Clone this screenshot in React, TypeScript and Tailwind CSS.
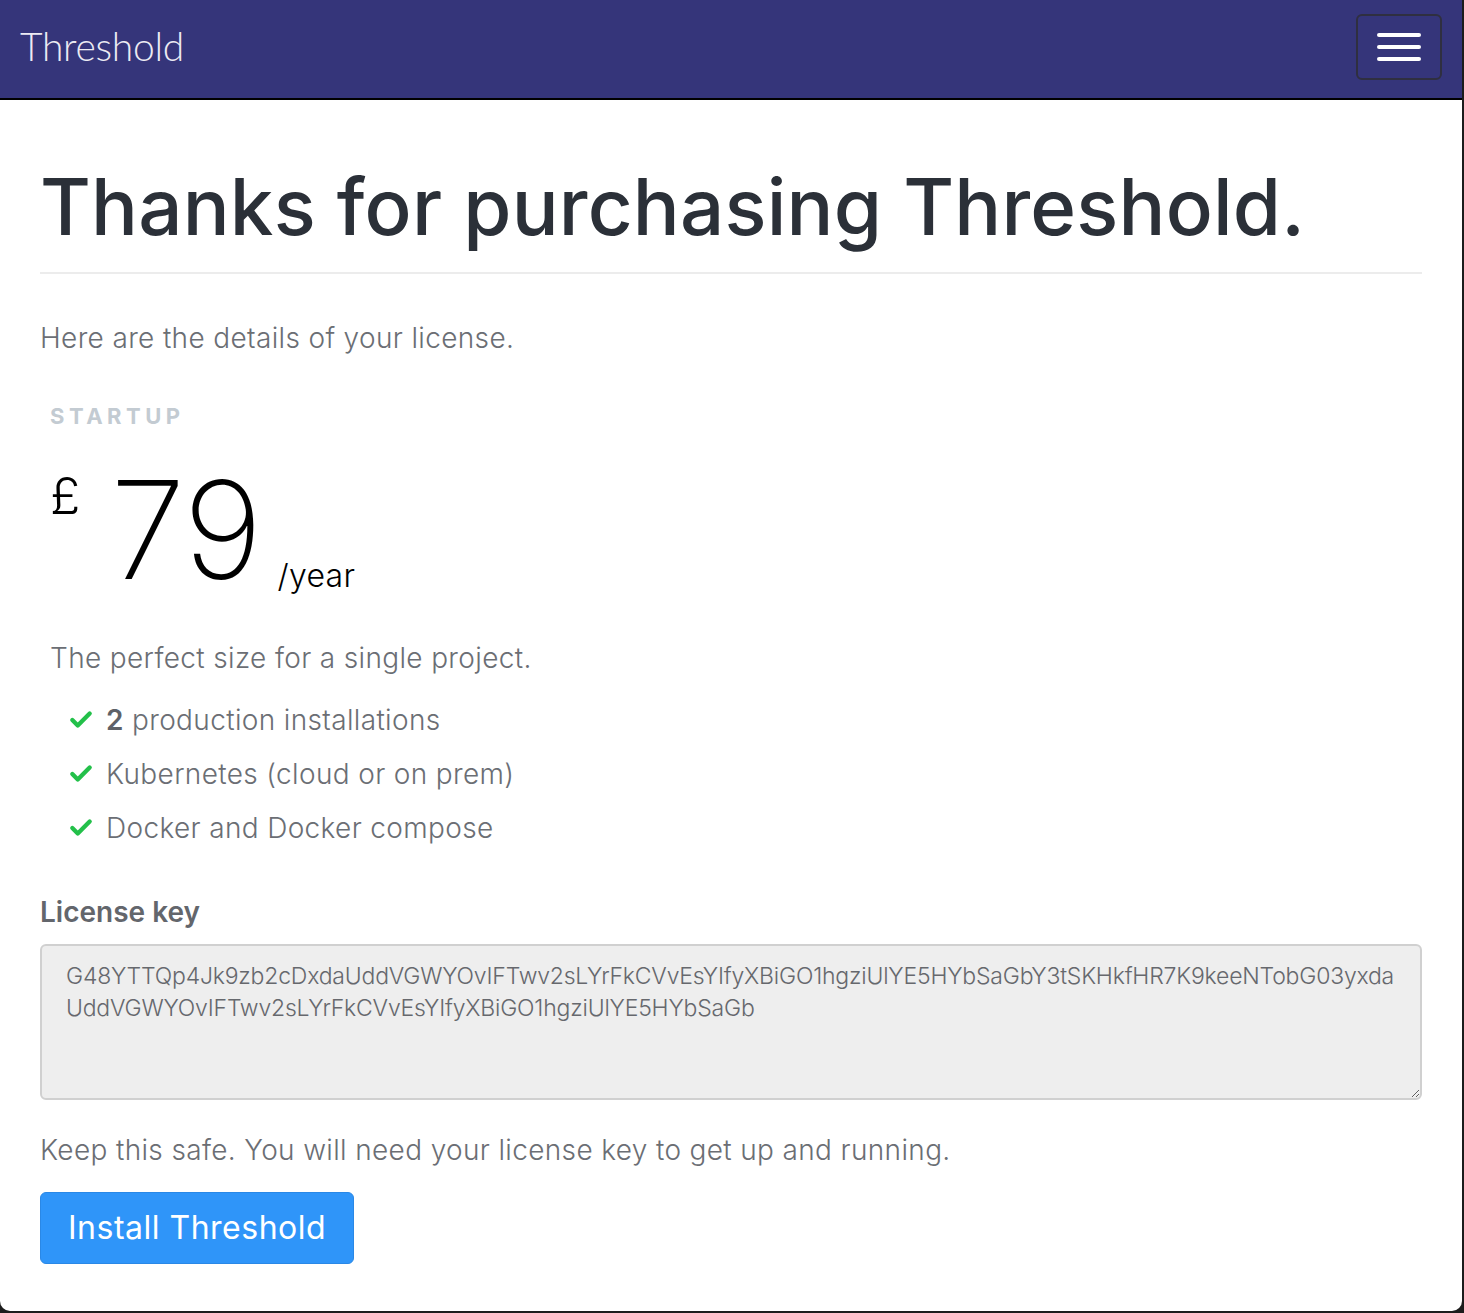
import { Check } from 'lucide-react';

const licenseKey =
  'G48YTTQp4Jk9zb2cDxdaUddVGWYOvIFTwv2sLYrFkCVvEsYIfyXBiGO1hgziUlYE5HYbSaGbY3tSKHkfHR7K9keeNTobG03yxda\nUddVGWYOvIFTwv2sLYrFkCVvEsYIfyXBiGO1hgziUlYE5HYbSaGb';

const features = [
  { bold: '2', text: ' production installations' },
  { bold: '', text: 'Kubernetes (cloud or on prem)' },
  { bold: '', text: 'Docker and Docker compose' },
];

function App() {
  return (
    <div className="min-h-[1313px] w-full bg-[#1c1c1c] pr-[2px] pb-[2px] font-['Inter',sans-serif]">
      <div className="min-h-[1311px] bg-white rounded-b-[10px] overflow-hidden">
        <nav className="h-[100px] bg-[#35357a] border-b-2 border-black flex items-center justify-between pl-5 pr-5">
          <span className="mt-[-6px] text-[39px] font-light text-[#ecebf3] tracking-[-0.3px] font-['Lato',sans-serif]">Threshold</span>
          <button className="w-[86px] h-[66px] mt-[-4px] border-2 border-[#2f2f40] rounded-[6px] flex flex-col items-center justify-center gap-[8px]">
            <span className="block w-[44px] h-[4px] bg-white rounded-sm" />
            <span className="block w-[44px] h-[4px] bg-white rounded-sm" />
            <span className="block w-[44px] h-[4px] bg-white rounded-sm" />
          </button>
        </nav>

        <main className="px-10">
          <h1 className="pt-[62px] pb-[20px] text-[78px] leading-[90px] font-medium text-[#2b3038] tracking-[0.2px] border-b-2 border-[#ececec]">
            Thanks for purchasing Threshold.
          </h1>

          <p className="mt-[46px] text-[28px] font-light text-[#6b6e74] leading-[36px] tracking-[0.35px]">
            Here are the details of your license.
          </p>

          <div className="ml-[10px]">
            <div className="mt-[46px] text-[22px] font-bold tracking-[4.5px] text-[#c3cbd2] leading-[28px]">STARTUP</div>

            <div className="mt-[40px] flex items-end text-black">
              <span className="self-start mt-[2px] text-[50px] font-light leading-[48px]">£</span>
              <span className="text-[136px] font-extralight leading-[120px] ml-[30px] tracking-[-1px]">79</span>
              <span className="ml-[16px] mb-[-4px] text-[32px] font-light leading-[36px] tracking-[0.3px]">/year</span>
            </div>

            <p className="mt-[50px] text-[28px] font-light text-[#6b6e74] leading-[36px] tracking-[0.35px]">
              The perfect size for a single project.
            </p>

            <ul className="mt-[26px] flex flex-col gap-[18px] pl-[18px]">
              {features.map((f, i) => (
                <li key={i} className="flex items-center gap-[12px] text-[28px] font-light text-[#6b6e74] leading-[36px] tracking-[0.35px]">
                  <Check className="w-[26px] h-[26px] text-[#23c04a]" strokeWidth={4} />
                  <span>
                    {f.bold && <b className="font-semibold text-[#5e6167]">{f.bold}</b>}
                    {f.text}
                  </span>
                </li>
              ))}
            </ul>
          </div>

          <label className="block mt-[48px] text-[28px] font-semibold text-[#63666c] leading-[36px]">License key</label>
          <textarea
            readOnly
            value={licenseKey}
            className="mt-[14px] block w-full h-[156px] bg-[#eeeeee] border-2 border-[#d0d0d0] rounded-[6px] px-[24px] py-[14px] text-[23px] font-light leading-[32px] tracking-[-0.2px] text-[#66686d] resize-y outline-none"
          />

          <p className="mt-[32px] text-[28px] font-light text-[#6b6e74] leading-[36px] tracking-[0.35px]">
            Keep this safe. You will need your license key to get up and running.
          </p>

          <button className="mt-[24px] h-[72px] px-[27px] bg-[#2f95f9] border border-[#2a88e6] rounded-[6px] text-white text-[32px] font-normal tracking-[0.5px]">
            Install Threshold
          </button>
        </main>
      </div>
    </div>
  );
}

export default App;
